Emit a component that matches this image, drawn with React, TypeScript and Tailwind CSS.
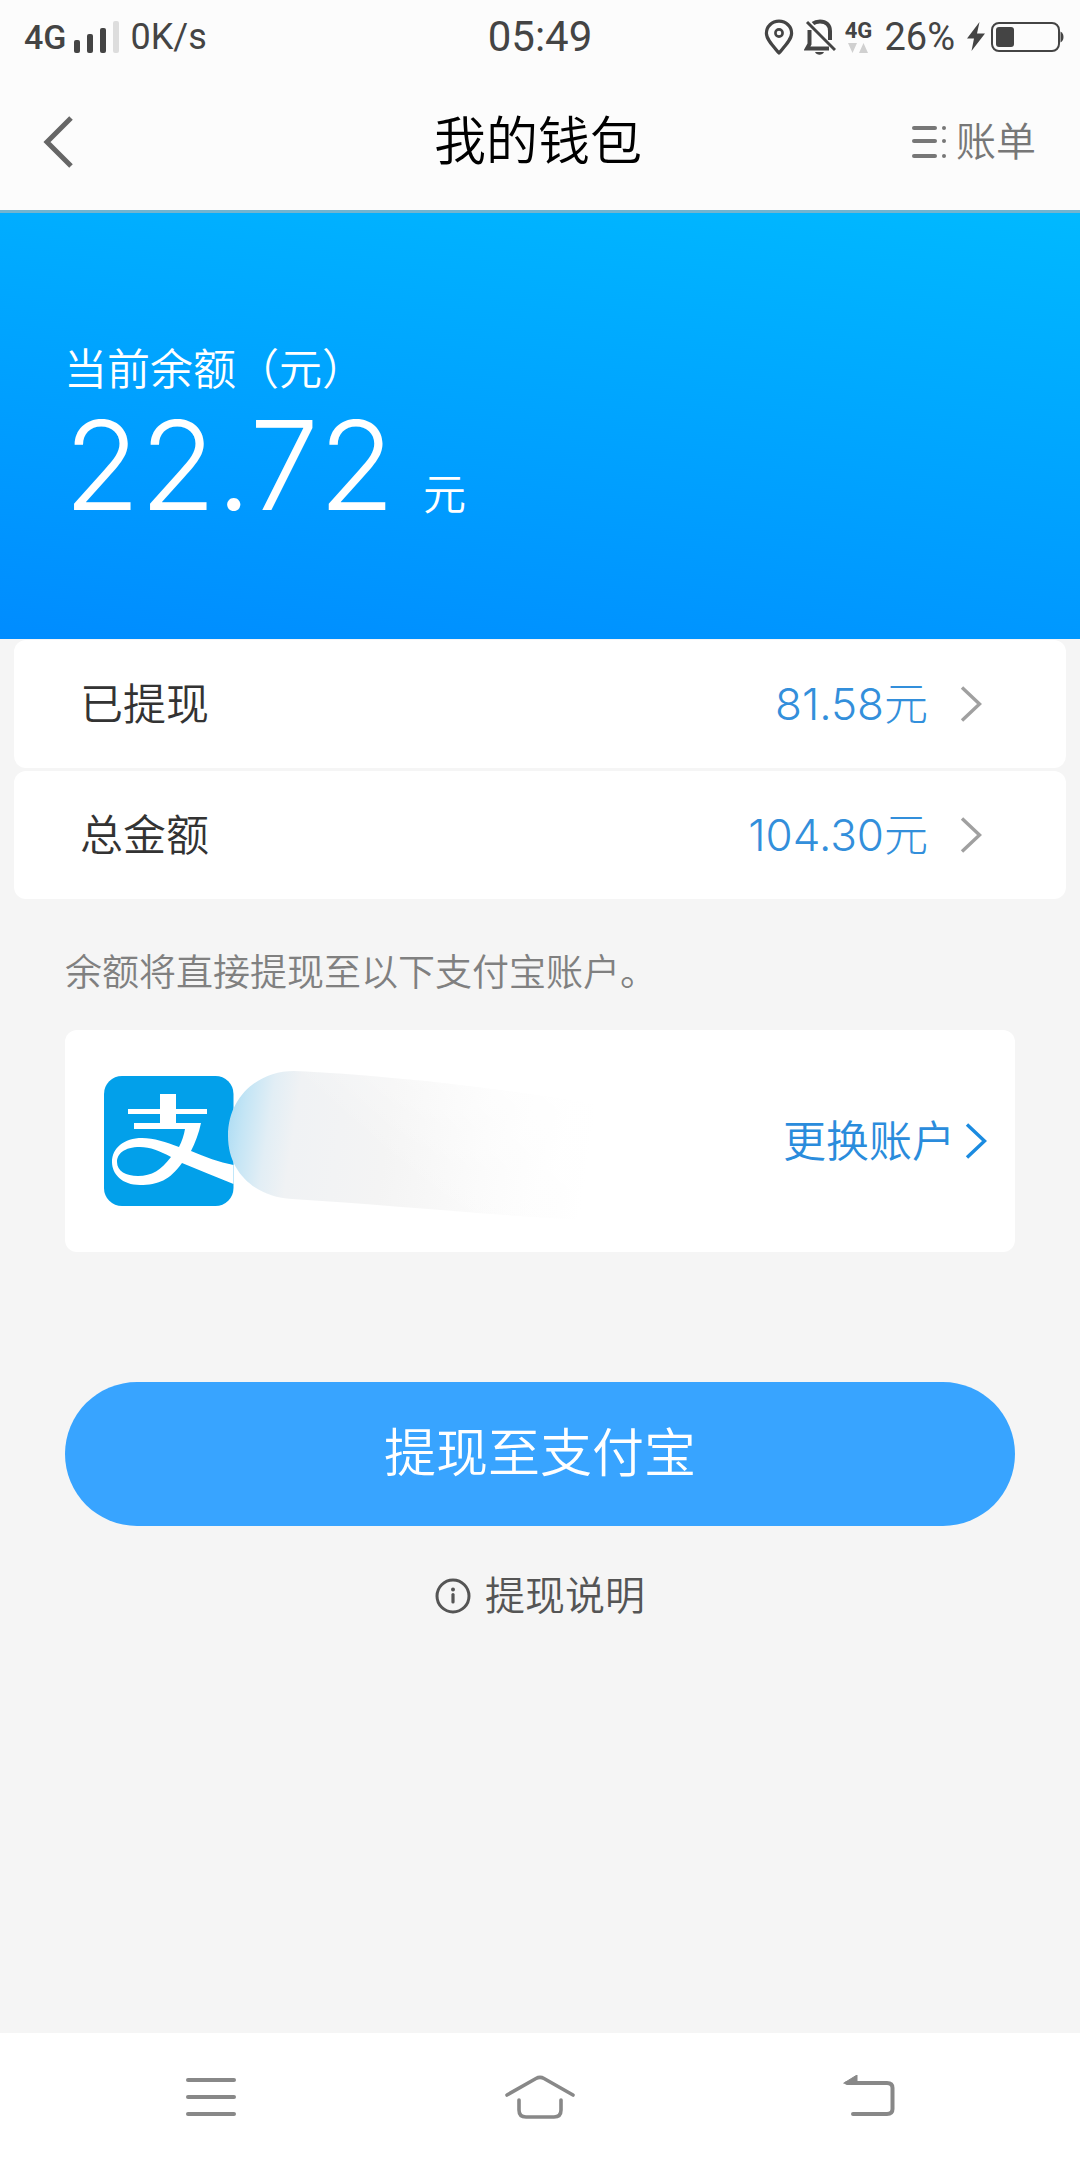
import React from 'react';

interface WalletRow {
  label: string;
  amount: string;
}

const ROWS: WalletRow[] = [
  { label: '已提现', amount: '81.58' },
  { label: '总金额', amount: '104.30' },
];

const Chevron: React.FC<{ className: string }> = ({ className }) => (
  <svg className={className} width="22" height="36" viewBox="0 0 22 36" fill="none" stroke="currentColor" strokeWidth="3.4" aria-hidden="true">
    <path d="M2 1.5L19.5 18L2 34.5" />
  </svg>
);

const StatusBar: React.FC = () => (
  <div className="grid h-[74px] grid-cols-[1fr_auto_1fr] items-center px-4 font-['Roboto',sans-serif] font-normal text-[#444444]">
    <div className="flex items-center pl-2">
      <span className="text-[34px] font-medium leading-10">4G</span>
      <svg className="ml-2" width="46" height="34" viewBox="0 0 46 34" fill="currentColor" aria-hidden="true">
        <rect x="0" y="20" width="6" height="13" rx="2" />
        <rect x="13" y="14" width="6" height="19" rx="2" />
        <rect x="26" y="8" width="6" height="25" rx="2" />
        <rect x="39" y="1" width="6" height="32" rx="2" fill="#dddddd" />
      </svg>
      <span className="ml-2.5 text-[36px] leading-10">0K/s</span>
    </div>
    <span className="text-[42px] leading-10">05:49</span>
    <div className="flex items-center justify-end">
      <svg width="30" height="36" viewBox="0 0 30 36" fill="none" stroke="currentColor" aria-hidden="true">
        <path d="M15 2.2C7.8 2.2 2.4 7.6 2.4 14.3C2.4 20.5 9 27 15 34C21 27 27.6 20.5 27.6 14.3C27.6 7.6 22.2 2.2 15 2.2Z" strokeWidth="3.2" strokeLinejoin="round" />
        <circle cx="15" cy="14" r="3.6" strokeWidth="2.6" />
      </svg>
      <svg className="ml-2.5" width="32" height="36" viewBox="0 0 32 36" fill="none" stroke="currentColor" strokeWidth="4" aria-hidden="true">
        <path d="M9 4.5C11 2.8 13.5 2.4 16 2.4C22 2.4 26 6 26 12V21" />
        <path d="M5.5 11V25L3 29.4H25" />
        <path d="M3 3L31 31" strokeWidth="3" />
        <path d="M11 33C12.5 36.5 18.5 36.5 20 33Z" fill="currentColor" stroke="none" />
      </svg>
      <div className="ml-2 flex w-7 flex-col items-center">
        <span className="text-[22px] font-bold leading-[22px]">4G</span>
        <svg width="20" height="12" viewBox="0 0 20 12" fill="#d0d0d0" aria-hidden="true">
          <path d="M0 1H9L4.5 11ZM11 11L15.5 1L20 11Z" />
        </svg>
      </div>
      <span className="ml-3 text-[38px] leading-10">26%</span>
      <svg className="ml-3" width="18" height="30" viewBox="0 0 18 30" fill="currentColor" aria-hidden="true">
        <path d="M12.5 0L0 16.5H7L4.5 29L18 11.5H10Z" />
      </svg>
      <svg className="ml-1.5" width="73" height="32" viewBox="0 0 73 32" aria-hidden="true">
        <rect x="1" y="2" width="67" height="28" rx="7" fill="none" stroke="currentColor" strokeWidth="2" />
        <rect x="5" y="6" width="18" height="20" rx="3" fill="currentColor" />
        <path d="M69.5 10.5C73.5 12.5 73.5 19.5 69.5 21.5Z" fill="currentColor" />
      </svg>
    </div>
  </div>
);

const TitleBar: React.FC = () => (
  <div className="flex h-[136px] items-center justify-between pl-10 pr-11">
    <div className="flex flex-1">
      <button type="button" aria-label="返回" className="text-[#666666]">
        <svg width="34" height="52" viewBox="0 0 34 52" fill="none" stroke="currentColor" strokeWidth="5">
          <path d="M31 2L7 26L31 50" />
        </svg>
      </button>
    </div>
    <h1 className="text-[52px] leading-[60px] text-black">我的钱包</h1>
    <div className="flex flex-1 justify-end">
      <button type="button" className="flex items-center gap-2.5 text-[#777777]">
        <svg width="34" height="34" viewBox="0 0 34 34" fill="currentColor" aria-hidden="true">
          <rect x="0" y="1" width="25" height="4" rx="2" />
          <rect x="0" y="14" width="25" height="4" rx="2" />
          <rect x="0" y="29" width="25" height="4" rx="2" />
          <circle cx="32" cy="3" r="2" />
          <circle cx="32" cy="16" r="2" />
          <circle cx="32" cy="31" r="2" />
        </svg>
        <span className="text-[40px] leading-[44px]">账单</span>
      </button>
    </div>
  </div>
);

const AlipayLogo: React.FC = () => (
  <svg className="shrink-0" width="130" height="130" viewBox="0 0 130 130" role="img" aria-label="支付宝">
    <rect width="129.5" height="130" rx="18" fill="#02a0ea" />
    <path
      fill="#ffffff"
      fillRule="evenodd"
      d="M56 18H72V33H103V38H72V47H97C95 57 91 67 87 75C101 81 115 86 129.5 89V108C112 101 95 94 78 87C66 104 54 109 36 109C18 109 8 98 8 86C8 72 20 62 38 62C50 62 62 66 75 71C78 65 80 59 81 53H30V47H56V38H24V33H56ZM67 81C56 75 46 71 36 71C20 71 13 78 13 86C13 95 22 100 34 100C48 100 57 94 67 81Z"
    />
  </svg>
);

// Smudge that hides the account name
const HiddenName: React.FC = () => (
  <svg className="-ml-1.5 shrink-0" width="372" height="164" viewBox="0 0 372 164" aria-hidden="true">
    <defs>
      <linearGradient id="smudge" x1="0" y1="0" x2="1" y2="0.06">
        <stop offset="0" stopColor="#a6daf4" />
        <stop offset="0.06" stopColor="#c4e5f5" />
        <stop offset="0.13" stopColor="#e2eef5" />
        <stop offset="0.2" stopColor="#f0f2f4" />
        <stop offset="0.45" stopColor="#f4f4f4" />
        <stop offset="0.72" stopColor="#fafafa" />
        <stop offset="1" stopColor="#ffffff" />
      </linearGradient>
      <linearGradient id="smudgeFade" gradientUnits="userSpaceOnUse" x1="300" y1="0" x2="190" y2="120">
        <stop offset="0" stopColor="#ffffff" stopOpacity="0.8" />
        <stop offset="1" stopColor="#ffffff" stopOpacity="0" />
      </linearGradient>
    </defs>
    <g transform="translate(0 10)">
      <path d="M0 67C0 28 30 2 66 2C150 6 250 16 372 36V152C260 146 160 136 64 130C28 128 0 104 0 67Z" fill="url(#smudge)" />
      <path d="M0 67C0 28 30 2 66 2C150 6 250 16 372 36V152C260 146 160 136 64 130C28 128 0 104 0 67Z" fill="url(#smudgeFade)" />
    </g>
  </svg>
);

const NavBar: React.FC = () => (
  <nav className="grid h-[127px] grid-cols-3 items-center bg-white px-[46px] text-[#888888]">
    <button type="button" aria-label="菜单" className="flex justify-center">
      <svg width="50" height="44" viewBox="0 0 50 44" fill="currentColor">
        <rect x="0" y="3" width="50" height="4" rx="2" />
        <rect x="0" y="20" width="50" height="4" rx="2" />
        <rect x="0" y="37" width="50" height="4" rx="2" />
      </svg>
    </button>
    <button type="button" aria-label="主页" className="flex justify-center">
      <svg width="72" height="44" viewBox="0 0 72 44" fill="none" stroke="currentColor" strokeWidth="3.6" strokeLinecap="round">
        <path d="M3 20L32 3.5Q36 1.2 40 3.5L69 20" />
        <path d="M15 25V35Q15 42 22 42H50Q57 42 57 35V25" />
      </svg>
    </button>
    <button type="button" aria-label="后退" className="flex justify-center">
      <svg width="52" height="44" viewBox="0 0 52 44" fill="none" stroke="currentColor" strokeWidth="4" strokeLinecap="round">
        <path d="M10 39H44Q49.5 39 49.5 34V13Q49.5 8 44 8H4" />
        <path d="M1 8L14 0V9Z" fill="currentColor" strokeWidth="1" strokeLinejoin="round" />
      </svg>
    </button>
  </nav>
);

export default function App() {
  return (
    <div className="flex min-h-screen flex-col bg-[#f5f5f5] font-['Inter','Noto_Sans_CJK_SC',sans-serif] font-[350]">
      <header className="border-b-3 border-[#72b4cf] bg-[#fcfcfc]">
        <StatusBar />
        <TitleBar />
      </header>

      <main className="flex-1">
        <section className="h-[426px] bg-[linear-gradient(8deg,#008cff,#00b9ff)] px-16 pt-[132px] text-white">
          <h2 className="text-[43px] leading-[48px]">当前余额（元）</h2>
          <p className="flex items-baseline gap-7">
            <span className="text-[124px] leading-[144px] font-light">22.72</span>
            <span className="text-[43px] leading-[48px]">元</span>
          </p>
        </section>

        <section className="flex flex-col gap-[3px] px-3.5 pt-px">
          {ROWS.map((row) => (
            <button
              key={row.label}
              type="button"
              className="flex h-32 items-center rounded-xl bg-white pl-[66px] pr-[84px]"
            >
              <span className="flex-1 text-left text-[43px] leading-[48px] text-[#333333]">{row.label}</span>
              <span className="text-[44px] leading-[48px] font-light text-[#338fdb]">{row.amount}元</span>
              <Chevron className="ml-8 text-[#a0a0a0]" />
            </button>
          ))}
        </section>

        <section className="px-[65px]">
          <p className="mt-[52px] text-[37px] leading-[44px] text-[#808080]">余额将直接提现至以下支付宝账户。</p>
          <div className="mt-[35px] flex h-[222px] items-center rounded-xl bg-white pl-[39px] pr-7">
            <AlipayLogo />
            <HiddenName />
            <button type="button" className="ml-auto flex items-center gap-2.5 text-[#2a8cdc]">
              <span className="text-[43px] leading-[48px]">更换账户</span>
              <Chevron className="text-[#1b8be0]" />
            </button>
          </div>
          <button
            type="button"
            className="mt-[130px] h-36 w-full rounded-full bg-[#38a4ff] text-[52px] leading-[60px] text-white"
          >
            提现至支付宝
          </button>
          <div className="mt-12 flex justify-center">
            <a href="#" className="flex items-center gap-3.5 text-[#555555]">
              <svg width="36" height="36" viewBox="0 0 36 36" fill="none" stroke="currentColor" strokeWidth="3" aria-hidden="true">
                <circle cx="18" cy="18" r="16" />
                <path d="M18 16.5V24" strokeWidth="3.2" strokeLinecap="round" />
                <circle cx="18" cy="11.5" r="2" fill="currentColor" stroke="none" />
              </svg>
              <span className="text-[40px] leading-[44px]">提现说明</span>
            </a>
          </div>
        </section>
      </main>

      <NavBar />
    </div>
  );
}
